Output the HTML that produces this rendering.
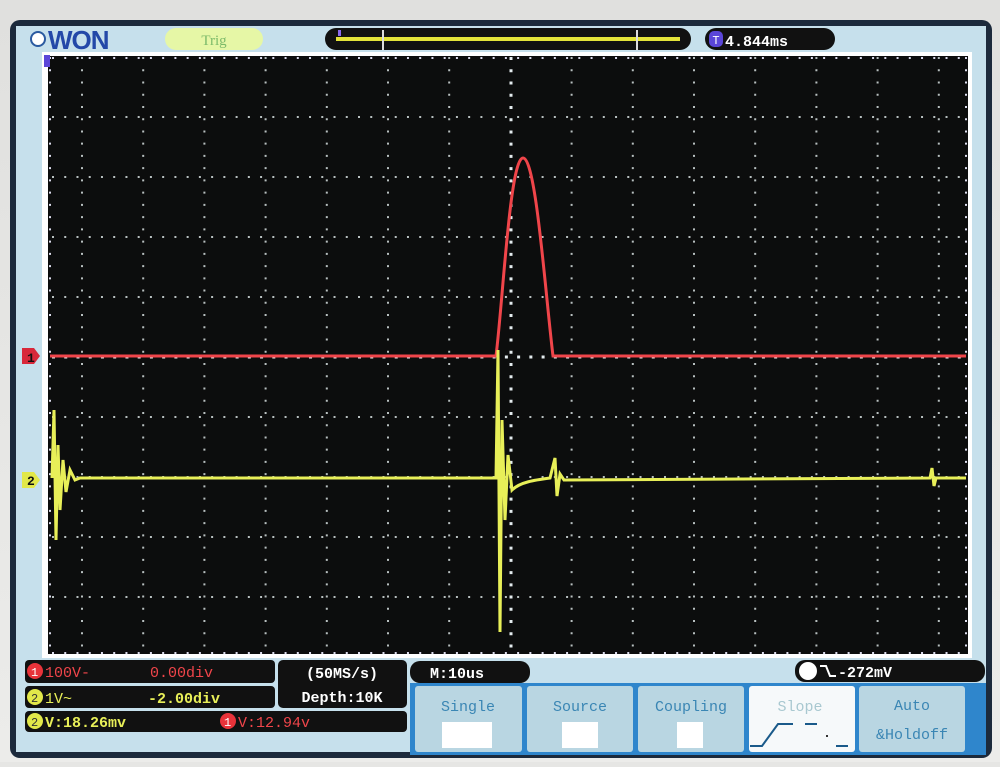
<!DOCTYPE html>
<html><head><meta charset="utf-8"><style>
body{margin:0;width:1000px;height:762px;overflow:hidden;background:#e6e6e4;font-family:"Liberation Mono",monospace}
</style></head><body>
<svg width="1000" height="762" viewBox="0 0 1000 762" xmlns="http://www.w3.org/2000/svg" font-family="Liberation Mono, monospace">
<defs><linearGradient id="bg" x1="0" y1="0" x2="0" y2="1"><stop offset="0" stop-color="#e0e0de"/><stop offset="1" stop-color="#ececea"/></linearGradient></defs>
<rect width="1000" height="762" fill="url(#bg)"/>
<rect x="10" y="20" width="982" height="738" rx="10" fill="#1c2a3c"/>
<rect x="16" y="26" width="970" height="726" fill="#c6e0ec"/>
<!-- top -->
<circle cx="38" cy="39" r="7" fill="#fff" stroke="#2a5aa0" stroke-width="2"/>
<text x="48" y="49" font-family="Liberation Sans, sans-serif" font-size="26" fill="#2348a8" font-weight="bold" letter-spacing="-1">WON</text>
<rect x="165" y="28" width="98" height="22" rx="11" fill="#e6f7a6"/>
<text x="214" y="45" font-size="15" fill="#7dbb6a" text-anchor="middle" font-family="Liberation Serif, serif">Trig</text>
<rect x="325" y="28" width="366" height="22" rx="11" fill="#111"/>
<rect x="336" y="37" width="344" height="4" fill="#e4e43a"/>
<rect x="338" y="30" width="3" height="6" fill="#8a6af0"/>
<rect x="382" y="30" width="2" height="20" fill="#ddd"/>
<rect x="636" y="30" width="2" height="20" fill="#ddd"/>
<rect x="705" y="28" width="130" height="22" rx="11" fill="#111"/>
<rect x="709" y="31" width="14" height="16" rx="5" fill="#5a46d8"/>
<text x="716" y="44" font-size="12" fill="#fff" text-anchor="middle">T</text>
<text x="725" y="46" font-size="15" fill="#fff" font-weight="bold">4.844ms</text>
<!-- plot -->
<rect x="42" y="52" width="930" height="606" fill="#fff"/>
<rect x="48" y="56" width="920" height="598" fill="#0c0d0d"/>
<g stroke="#b8c0c0" stroke-width="2" stroke-dasharray="2 10.24">
<line x1="82" y1="57" x2="82" y2="654"/><line x1="143.2" y1="57" x2="143.2" y2="654"/><line x1="204.4" y1="57" x2="204.4" y2="654"/><line x1="265.6" y1="57" x2="265.6" y2="654"/><line x1="326.8" y1="57" x2="326.8" y2="654"/><line x1="388" y1="57" x2="388" y2="654"/><line x1="449.2" y1="57" x2="449.2" y2="654"/><line x1="571.6" y1="57" x2="571.6" y2="654"/><line x1="632.8" y1="57" x2="632.8" y2="654"/><line x1="694" y1="57" x2="694" y2="654"/><line x1="755.2" y1="57" x2="755.2" y2="654"/><line x1="816.4" y1="57" x2="816.4" y2="654"/><line x1="877.6" y1="57" x2="877.6" y2="654"/><line x1="938.8" y1="57" x2="938.8" y2="654"/>
</g>
<g stroke="#b8c0c0" stroke-width="2" stroke-dasharray="2 10.24">
<line x1="52" y1="117" x2="966" y2="117"/><line x1="52" y1="177" x2="966" y2="177"/><line x1="52" y1="237" x2="966" y2="237"/><line x1="52" y1="297" x2="966" y2="297"/><line x1="52" y1="417" x2="966" y2="417"/><line x1="52" y1="477" x2="966" y2="477"/><line x1="52" y1="537" x2="966" y2="537"/><line x1="52" y1="597" x2="966" y2="597"/>
</g>
<g stroke="#e4ecee" stroke-width="3" stroke-dasharray="3 9.24">
<line x1="511" y1="57" x2="511" y2="654"/><line x1="52" y1="357" x2="966" y2="357"/>
</g>
<g stroke="#dde" stroke-width="2" stroke-dasharray="2 10.24">
<line x1="50" y1="57" x2="50" y2="654"/><line x1="966" y1="57" x2="966" y2="654"/>
<line x1="52" y1="58" x2="966" y2="58"/><line x1="52" y1="653" x2="966" y2="653"/>
</g>
<!-- traces -->
<path d="M50 356 L496 356 C503 300 510 158 523 158 C536 158 545 290 553 356 L966 356" fill="none" stroke="#f0454a" stroke-width="3"/>
<path d="M52 478 L54 410 L56 540 L58 445 L60 510 L63 460 L66 492 L70 470 L75 480 L80 478 L496 478 L498 350 L500 632 L502 420 L505 520 L508 455 L512 490 C520 482 535 480 550 478 L555 458 L557 496 L560 474 L564 480 L930 478 L932 468 L934 486 L936 478 L966 478" fill="none" stroke="#e8ef58" stroke-width="3"/>
<!-- markers -->
<path d="M22 348 H34 L40 356 L34 364 H22 Z" fill="#d8283a"/>
<text x="27" y="362" font-size="13" fill="#111" font-weight="bold">1</text>
<path d="M22 472 H34 L40 480 L34 488 H22 Z" fill="#e2e84a"/>
<text x="27" y="485" font-size="13" fill="#111" font-weight="bold">2</text>
<rect x="44" y="55" width="6" height="12" fill="#5a46d8"/>
<!-- bottom -->
<rect x="25" y="660" width="250" height="23" rx="4" fill="#111"/>
<circle cx="35" cy="671" r="8" fill="#e8333a"/><text x="31" y="676" font-size="12" fill="#fff">1</text>
<text x="45" y="677" font-size="15" fill="#f0454a">100V-</text>
<text x="150" y="677" font-size="15" fill="#f0454a">0.00div</text>
<rect x="25" y="686" width="250" height="22" rx="4" fill="#111"/>
<circle cx="35" cy="697" r="8" fill="#e2e84a"/><text x="31" y="702" font-size="12" fill="#333">2</text>
<text x="45" y="703" font-size="15" fill="#e8ef58">1V~</text>
<text x="148" y="703" font-size="15" fill="#e8ef58" font-weight="bold">-2.00div</text>
<rect x="25" y="711" width="382" height="21" rx="4" fill="#111"/>
<circle cx="35" cy="721" r="8" fill="#e2e84a"/><text x="31" y="726" font-size="12" fill="#333">2</text>
<text x="45" y="727" font-size="15" fill="#e8ef58" font-weight="bold">V:18.26mv</text>
<circle cx="228" cy="721" r="8" fill="#e8333a"/><text x="224" y="726" font-size="12" fill="#fff">1</text>
<text x="238" y="727" font-size="15" fill="#f0454a">V:12.94v</text>
<rect x="278" y="660" width="129" height="48" rx="5" fill="#111"/>
<text x="342" y="678" font-size="15" fill="#fff" font-weight="bold" text-anchor="middle">(50MS/s)</text>
<text x="342" y="702" font-size="15" fill="#fff" font-weight="bold" text-anchor="middle">Depth:10K</text>
<rect x="410" y="683" width="576" height="72" fill="#2f86cc"/>
<rect x="410" y="661" width="120" height="22" rx="10" fill="#111"/>
<text x="430" y="678" font-size="15" fill="#fff" font-weight="bold">M:10us</text>
<rect x="795" y="660" width="190" height="22" rx="10" fill="#111"/>
<circle cx="808" cy="671" r="9" fill="#fff"/>
<path d="M820 666 H826 L830 676 H836" fill="none" stroke="#fff" stroke-width="2"/>
<text x="838" y="677" font-size="15" fill="#fff" font-weight="bold">-272mV</text>
<g font-size="15" fill="#3a86b4" text-anchor="middle">
<rect x="415" y="686" width="107" height="66" rx="3" fill="#b9d6e2"/>
<text x="468" y="711">Single</text><rect x="442" y="722" width="50" height="26" fill="#fff"/>
<rect x="527" y="686" width="106" height="66" rx="3" fill="#b9d6e2"/>
<text x="580" y="711">Source</text><rect x="562" y="722" width="36" height="26" fill="#fff"/>
<rect x="638" y="686" width="106" height="66" rx="3" fill="#b9d6e2"/>
<text x="691" y="711">Coupling</text><rect x="677" y="722" width="26" height="26" fill="#fff"/>
<rect x="749" y="686" width="106" height="66" rx="3" fill="#f6f9fa"/>
<text x="800" y="711" fill="#a8c8d0">Slope</text>
<path d="M750 746 H762 L778 724 H793 M805 724 H817 M836 746 H848" fill="none" stroke="#1a5a8a" stroke-width="2"/>
<rect x="826" y="735" width="2" height="2" fill="#333"/>
<rect x="859" y="686" width="106" height="66" rx="3" fill="#b9d6e2"/>
<text x="912" y="710">Auto</text><text x="912" y="739">&amp;Holdoff</text>
</g>
</svg>
</body></html>
